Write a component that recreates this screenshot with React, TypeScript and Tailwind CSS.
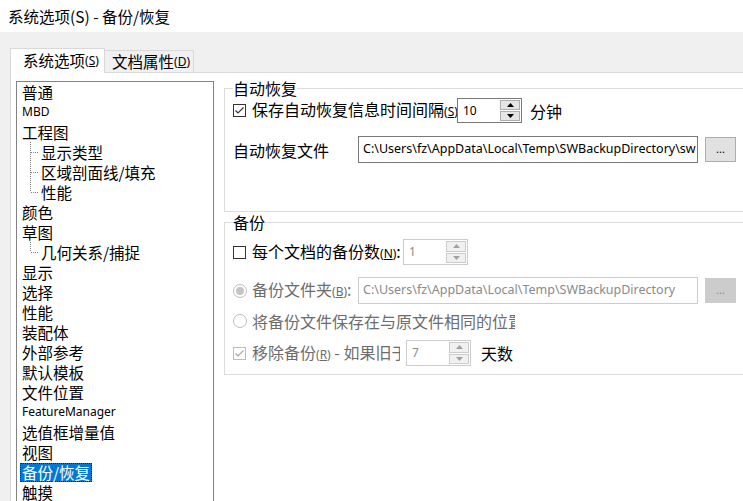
import React from 'react';

const cjk = "font-['Noto_Sans_CJK_SC',sans-serif]";
const latin = "font-['Noto_Sans',sans-serif]";

type Row = { label: string; level: 0 | 1; last?: boolean; latin?: boolean; selected?: boolean };

const rows: Row[] = [
  { label: '普通', level: 0 },
  { label: 'MBD', level: 0, latin: true },
  { label: '工程图', level: 0 },
  { label: '显示类型', level: 1 },
  { label: '区域剖面线/填充', level: 1 },
  { label: '性能', level: 1, last: true },
  { label: '颜色', level: 0 },
  { label: '草图', level: 0 },
  { label: '几何关系/捕捉', level: 1, last: true },
  { label: '显示', level: 0 },
  { label: '选择', level: 0 },
  { label: '性能', level: 0 },
  { label: '装配体', level: 0 },
  { label: '外部参考', level: 0 },
  { label: '默认模板', level: 0 },
  { label: '文件位置', level: 0 },
  { label: 'FeatureManager', level: 0, latin: true },
  { label: '选值框增量值', level: 0 },
  { label: '视图', level: 0 },
  { label: '备份/恢复', level: 0, selected: true },
  { label: '触摸', level: 0 },
];

function Mnemonic({ k, colon }: { k: string; colon?: boolean }) {
  return (
    <span className={`${latin} text-[12px]`}>
      (<span className="underline">{k}</span>){colon ? <span className={`${cjk} text-[16px]`}>:</span> : null}
    </span>
  );
}

function Check({ checked, disabled }: { checked?: boolean; disabled?: boolean }) {
  return (
    <span
      className={`w-[13px] h-[13px] shrink-0 border bg-white flex items-center justify-center ${
        disabled ? 'border-[#bcbcbc]' : 'border-[#333333]'
      }`}
    >
      {checked && (
        <svg width="11" height="11" viewBox="0 0 11 11">
          <polyline
            points="1.5,5.5 4,8 9.5,2.5"
            fill="none"
            stroke={disabled ? '#a8a8a8' : '#333333'}
            strokeWidth="1.2"
          />
        </svg>
      )}
    </span>
  );
}

function Radio({ checked }: { checked?: boolean }) {
  return (
    <span className="w-[14px] h-[14px] shrink-0 rounded-full border border-[#bcbcbc] bg-white flex items-center justify-center">
      {checked && <span className="w-[8px] h-[8px] rounded-full bg-[#c4c4c4]" />}
    </span>
  );
}

function Arrow({ up, color }: { up?: boolean; color: string }) {
  return (
    <svg width="7" height="4" viewBox="0 0 7 4">
      <polygon points={up ? '0,4 7,4 3.5,0' : '0,0 7,0 3.5,4'} fill={color} />
    </svg>
  );
}

function Spin({ value, disabled, h }: { value: string; disabled?: boolean; h: string }) {
  const arrow = disabled ? '#a0a0a0' : '#000000';
  return (
    <div
      className={`w-[65px] ${h} shrink-0 flex border bg-white ${
        disabled ? 'border-[#cccccc]' : 'border-[#7a7a7a]'
      }`}
    >
      <div
        className={`flex-1 pl-[5px] flex items-center ${latin} text-[12px] ${
          disabled ? 'text-[#8a8a8a]' : 'text-black'
        }`}
      >
        {value}
      </div>
      <div className="w-[21px] flex flex-col gap-[1px] py-[1px] pr-[1px]">
        <div
          className={`flex-1 flex items-center justify-center border ${
            disabled ? 'border-[#cccccc] bg-[#f0f0f0]' : 'border-[#adadad] bg-[#e5e5e5]'
          }`}
        >
          <Arrow up color={arrow} />
        </div>
        <div
          className={`flex-1 flex items-center justify-center border ${
            disabled ? 'border-[#cccccc] bg-[#f0f0f0]' : 'border-[#adadad] bg-[#e5e5e5]'
          }`}
        >
          <Arrow color={arrow} />
        </div>
      </div>
    </div>
  );
}

function PathField({ value, disabled }: { value: string; disabled?: boolean }) {
  return (
    <div
      className={`w-[340px] h-[27px] shrink-0 border bg-white pl-[4px] flex items-center overflow-hidden whitespace-nowrap ${latin} text-[12.5px] ${
        disabled ? 'border-[#cccccc] text-[#8a8a8a]' : 'border-[#7a7a7a] text-black'
      }`}
    >
      {value}
    </div>
  );
}

function Browse({ disabled }: { disabled?: boolean }) {
  return (
    <div
      className={`ml-[7px] w-[31px] h-[25px] shrink-0 border flex items-center justify-center ${latin} text-[11px] ${
        disabled ? 'border-[#cccccc] bg-[#cccccc] text-[#8a8a8a]' : 'border-[#adadad] bg-[#e1e1e1] text-black'
      }`}
    >
      ...
    </div>
  );
}

function Connector({ last }: { last?: boolean }) {
  return (
    <svg width="11" height="20" viewBox="0 0 11 20" className="shrink-0">
      <line x1="0.5" y1="0" x2="0.5" y2={last ? 10 : 20} stroke="#808080" strokeDasharray="1 1" />
      <line x1="1" y1="10.5" x2="9" y2="10.5" stroke="#808080" strokeDasharray="1 1" />
    </svg>
  );
}

function Tree() {
  return (
    <div className="mt-[3px] w-[198px] h-[425px] shrink-0 border border-[#828282] bg-white overflow-hidden">
      {rows.map((r, i) => (
        <div key={i} className="h-[20px] flex items-center pl-[5px] whitespace-nowrap">
          {r.level === 1 && (
            <>
              <span className="w-[8px] shrink-0" />
              <Connector last={r.last} />
            </>
          )}
          {r.selected ? (
            <span
              className={`-ml-[2px] h-[19px] mt-[1px] px-[1px] border border-dotted border-[#222222] bg-[#0078d7] text-white ${cjk} text-[15.5px] leading-[17px]`}
            >
              {r.label}
            </span>
          ) : (
            <span className={`${r.latin ? `${latin} text-[12px]` : `${cjk} text-[15.5px]`} leading-[20px]`}>
              {r.label}
            </span>
          )}
        </div>
      ))}
    </div>
  );
}

const path = 'C:\\Users\\fz\\AppData\\Local\\Temp\\SWBackupDirectory';

export default function App() {
  return (
    <div className={`w-[743px] h-[501px] overflow-hidden bg-[#f0f0f0] text-black ${cjk}`}>
      <div className="h-[32px] bg-white flex items-center pl-[8px] text-[15.5px] leading-[20px]">
        系统选项(S) - 备份/恢复
      </div>

      <div className="pl-[10px] pt-[16px]">
        {/* Tabs */}
        <div className="flex items-end">
          <div className="relative z-10 -mb-px h-[25px] w-[95px] bg-white border-t border-l border-r border-[#d9d9d9] pl-[12px] flex items-center whitespace-nowrap text-[15.5px]">
            系统选项<Mnemonic k="S" />
          </div>
          <div className="h-[22px] w-[89px] bg-[#f0f0f0] border-t border-r border-[#d9d9d9] pl-[7px] flex items-center whitespace-nowrap text-[15.5px]">
            文档属性<Mnemonic k="D" />
          </div>
        </div>

        {/* Page */}
        <div className="h-[440px] bg-white border-l border-t border-[#d9d9d9] pl-[5px] pt-[5px] flex items-start">
          <Tree />

          <div className="ml-[10px] w-[540px] shrink-0 flex flex-col">
            <fieldset className="border border-[#dcdcdc] pl-[8px] pb-[48px] m-0">
              <legend className="text-[16px] leading-[20px] p-0">自动恢复</legend>
              <div className="h-[25px] flex items-center">
                <Check checked />
                <span className="ml-[6px] w-[205px] overflow-hidden whitespace-nowrap text-[16px] leading-[20px]">
                  保存自动恢复信息时间间隔<Mnemonic k="S" />
                </span>
                <Spin value="10" h="h-[25px]" />
                <span className="ml-[8px] text-[16px] leading-[20px]">分钟</span>
              </div>
              <div className="mt-[13px] flex items-center">
                <span className="w-[125px] shrink-0 text-[16px] leading-[20px]">自动恢复文件</span>
                <PathField value={path + '\\sw'} />
                <Browse />
              </div>
            </fieldset>

            <fieldset className="border border-[#dcdcdc] pl-[8px] pb-[8px] m-0">
              <legend className="text-[16px] leading-[20px] p-0">备份</legend>
              <div className="mt-[7px] h-[26px] flex items-center">
                <Check />
                <span className="ml-[6px] w-[151px] overflow-hidden whitespace-nowrap text-[16px] leading-[20px]">
                  每个文档的备份数<Mnemonic k="N" colon />
                </span>
                <Spin value="1" disabled h="h-[26px]" />
              </div>
              <div className="mt-[12px] h-[27px] flex items-center">
                <Radio checked />
                <span className="ml-[5px] w-[106px] overflow-hidden whitespace-nowrap text-[16px] leading-[20px] text-[#6d6d6d]">
                  备份文件夹<Mnemonic k="B" colon />
                </span>
                <PathField value={path} disabled />
                <Browse disabled />
              </div>
              <div className="mt-[7px] h-[20px] flex items-center">
                <Radio />
                <span className="ml-[5px] w-[263px] overflow-hidden whitespace-nowrap text-[16px] leading-[20px] text-[#6d6d6d]">
                  将备份文件保存在与原文件相同的位置
                </span>
              </div>
              <div className="mt-[9px] h-[26px] flex items-center">
                <Check checked disabled />
                <span className="ml-[6px] w-[148px] overflow-hidden whitespace-nowrap text-[16px] leading-[20px] text-[#6d6d6d]">
                  移除备份<Mnemonic k="R" /> - 如果旧于
                </span>
                <span className="ml-[6px]">
                  <Spin value="7" disabled h="h-[26px]" />
                </span>
                <span className="ml-[10px] text-[16px] leading-[20px]">天数</span>
              </div>
            </fieldset>
          </div>
        </div>
      </div>
    </div>
  );
}
